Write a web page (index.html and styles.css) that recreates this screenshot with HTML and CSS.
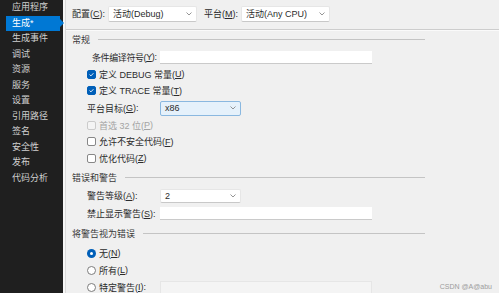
FILE: index.html
```html
<!DOCTYPE html>
<html lang="zh-CN">
<head>
    <meta charset="UTF-8">
    <meta name="viewport" content="width=device-width, initial-scale=1.0">
    <title>项目属性 - 生成</title>
    <link rel="stylesheet" href="styles.css">
</head>
<body>
    <div class="app">
        <nav class="side">
            <div class="side-item">应用程序</div>
            <div class="side-item active">生成*</div>
            <div class="side-item">生成事件</div>
            <div class="side-item">调试</div>
            <div class="side-item">资源</div>
            <div class="side-item">服务</div>
            <div class="side-item">设置</div>
            <div class="side-item">引用路径</div>
            <div class="side-item">签名</div>
            <div class="side-item">安全性</div>
            <div class="side-item">发布</div>
            <div class="side-item">代码分析</div>
        </nav>

        <main class="main">
            <div class="toolbar">
                <span class="label">配置(<u>C</u>):</span>
                <div class="select wide">
                    <span>活动(Debug)</span>
                    <svg class="chev" viewBox="0 0 6 4"><polyline points="0.5,0.5 3,3 5.5,0.5"/></svg>
                </div>
                <span class="label second">平台(<u>M</u>):</span>
                <div class="select wide">
                    <span>活动(Any CPU)</span>
                    <svg class="chev" viewBox="0 0 6 4"><polyline points="0.5,0.5 3,3 5.5,0.5"/></svg>
                </div>
            </div>

            <div class="content">
                <!-- 常规 -->
                <section class="group">
                    <div class="group-title"><span>常规</span><i class="rule"></i></div>
                    <div class="row field">
                        <span class="field-label indent">条件编译符号(<u>Y</u>):</span>
                        <div class="textbox"></div>
                    </div>
                    <div class="row"><span class="box on"><svg viewBox="0 0 9 9"><polyline points="2,4.6 3.8,6.3 7,2.8"/></svg></span>定义 DEBUG 常量(<u>U</u>)</div>
                    <div class="row"><span class="box on"><svg viewBox="0 0 9 9"><polyline points="2,4.6 3.8,6.3 7,2.8"/></svg></span>定义 TRACE 常量(<u>T</u>)</div>
                    <div class="row field">
                        <span class="field-label">平台目标(<u>G</u>):</span>
                        <div class="select narrow focus">
                            <span>x86</span>
                            <svg class="chev" viewBox="0 0 6 4"><polyline points="0.5,0.5 3,3 5.5,0.5"/></svg>
                        </div>
                    </div>
                    <div class="row muted"><span class="box disabled"></span>首选 32 位(<u>P</u>)</div>
                    <div class="row"><span class="box"></span>允许不安全代码(<u>F</u>)</div>
                    <div class="row"><span class="box"></span>优化代码(<u>Z</u>)</div>
                </section>

                <!-- 错误和警告 -->
                <section class="group">
                    <div class="group-title"><span>错误和警告</span><i class="rule"></i></div>
                    <div class="row field">
                        <span class="field-label">警告等级(<u>A</u>):</span>
                        <div class="select narrow small">
                            <span>2</span>
                            <svg class="chev" viewBox="0 0 6 4"><polyline points="0.5,0.5 3,3 5.5,0.5"/></svg>
                        </div>
                    </div>
                    <div class="row field">
                        <span class="field-label">禁止显示警告(<u>S</u>):</span>
                        <div class="textbox"></div>
                    </div>
                </section>

                <!-- 将警告视为错误 -->
                <section class="group">
                    <div class="group-title"><span>将警告视为错误</span><i class="rule"></i></div>
                    <div class="radios">
                        <div class="row"><span class="radio on"></span>无(<u>N</u>)</div>
                        <div class="row"><span class="radio"></span>所有(<u>L</u>)</div>
                        <div class="row field">
                            <span class="field-label"><span class="radio"></span>特定警告(<u>I</u>):</span>
                            <div class="textbox disabled"></div>
                        </div>
                    </div>
                </section>
            </div>
        </main>

        <div class="watermark">CSDN @A@abu</div>
    </div>
</body>
</html>
```

FILE: styles.css
```css
body {
    margin: 0;
    font-family: "Liberation Sans", "Noto Sans CJK SC", sans-serif;
    font-size: 9px;
    background: #f0f0f0;
    color: #2b2b2b;
}

u {
    text-decoration: underline;
    text-underline-offset: 1px;
}

.app {
    display: flex;
    height: 293px;
    overflow: hidden;
    position: relative;
}

/* 左侧导航 */
.side {
    width: 63px;
    flex-shrink: 0;
    background: #1f1f1f;
    border-right: 2px solid #f6f6f6;
    color: #cfcfcf;
}

.side-item {
    height: 15.5px;
    line-height: 15.5px;
    padding-left: 12px;
    position: relative;
}

.side-item.active {
    background: #0078d4;
    color: #fff;
    margin: 0 3px 0 6px;
    padding-left: 6px;
}

.side-item.active::after {
    content: "";
    position: absolute;
    right: -4px;
    top: 3.75px;
    border-left: 4px solid #0078d4;
    border-top: 4px solid transparent;
    border-bottom: 4px solid transparent;
    z-index: 2;
}

/* 主区域 */
.main {
    flex: 1;
    border-left: 1px solid #dadada;
}

.toolbar {
    height: 30px;
    box-sizing: border-box;
    display: flex;
    align-items: center;
    padding: 0 0 2px 6px;
    border-bottom: 1px solid #cdcdcd;
    box-shadow: 0 1px 0 #fafafa;
    white-space: nowrap;
}

.toolbar .label + .select {
    margin-left: 3px;
}

.toolbar .label.second {
    margin-left: 7px;
}

.select {
    height: 16px;
    box-sizing: border-box;
    display: flex;
    align-items: center;
    justify-content: space-between;
    padding: 0 4px;
    background: #fff;
    border: 1px solid #e6e6e6;
    border-bottom-color: #c8c8c8;
    border-radius: 2px;
}

.select.wide {
    width: 89px;
}

.select.narrow {
    width: 81px;
    height: 15px;
}

.select.small {
    height: 14px;
}

.select.focus {
    background: #e5f1fb;
    border-color: #8ab8e0;
}

.chev {
    width: 6px;
    height: 4px;
}

.chev polyline {
    fill: none;
    stroke: #7a7a7a;
    stroke-width: 0.8;
}

/* 内容 */
.content {
    width: 353px;
    padding-left: 6px;
}

.group-title {
    height: 19px;
    margin-top: 1px;
    display: flex;
    align-items: center;
    color: #3a3a3a;
}

.group:first-child .group-title {
    height: 17px;
}

.rule {
    flex: 1;
    height: 1px;
    margin-left: 8px;
    background: #c4c4c4;
}

.row {
    height: 16.5px;
    display: flex;
    align-items: center;
    padding-left: 15px;
    white-space: nowrap;
}

.row.field {
    height: 18px;
}

.radios {
    padding-top: 2px;
}

.radios .row,
.radios .row.field {
    height: 17px;
}

.field-label {
    width: 73px;
    flex-shrink: 0;
    display: flex;
    align-items: center;
    box-sizing: border-box;
    white-space: nowrap;
}

.field-label.indent {
    padding-left: 5px;
    letter-spacing: -0.4px;
}

.textbox {
    width: 212px;
    height: 12px;
    background: #fff;
    border-bottom: 1px solid #cacaca;
}

.textbox.disabled {
    height: 13px;
    box-sizing: border-box;
    background: #f4f4f4;
    border: 1px solid #e6e6e6;
}

.muted {
    color: #a3a3a3;
}

/* 复选框和单选按钮 */
.box {
    width: 9px;
    height: 9px;
    flex-shrink: 0;
    box-sizing: border-box;
    margin-right: 3px;
    border: 1px solid #878787;
    border-radius: 2px;
    background: #fff;
}

.box.on {
    background: #005fb8;
    border-color: #005fb8;
}

.box svg {
    display: block;
    width: 7px;
    height: 7px;
}

.box svg polyline {
    fill: none;
    stroke: #fff;
    stroke-width: 1.1;
}

.box.disabled {
    border-color: #cbcbcb;
    background: #f4f4f4;
}

.radio {
    width: 9px;
    height: 9px;
    flex-shrink: 0;
    box-sizing: border-box;
    margin-right: 3px;
    border: 1px solid #7c7c7c;
    border-radius: 50%;
    background: #fff;
}

.radio.on {
    border: none;
    background: #005fb8;
    display: flex;
    align-items: center;
    justify-content: center;
}

.radio.on::after {
    content: "";
    width: 3px;
    height: 3px;
    border-radius: 50%;
    background: #fff;
}

.watermark {
    position: absolute;
    right: 7px;
    bottom: 3px;
    font-family: "Liberation Sans", sans-serif;
    font-size: 7px;
    color: #9c9c9c;
}
```
